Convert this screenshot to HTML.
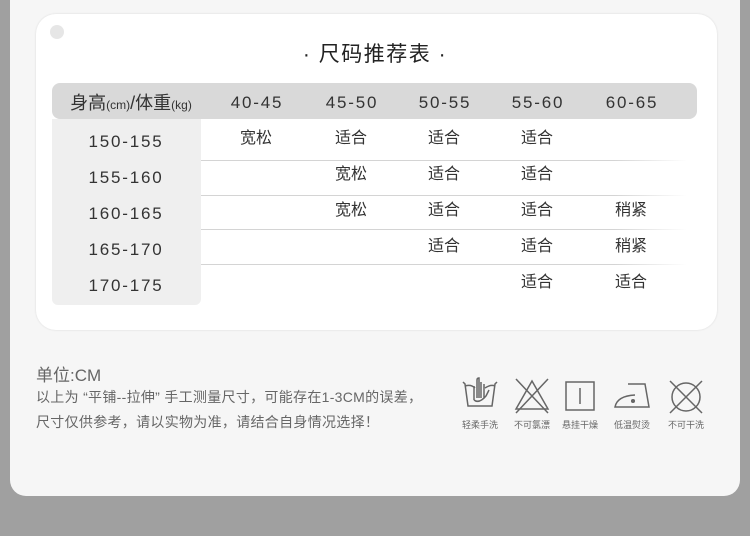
<!DOCTYPE html>
<html><head><meta charset="utf-8"><style>
*{margin:0;padding:0;box-sizing:border-box}
body{width:750px;height:536px;background:#a0a0a0;position:relative;overflow:hidden;font-family:"Liberation Sans","Noto Sans CJK SC",sans-serif;color:#333}
.panel{position:absolute;left:10px;top:-20px;width:730px;height:516px;background:#f6f6f6;border-radius:0 0 16px 16px}
.card{position:absolute;left:36px;top:14px;width:681px;height:316px;background:#fff;border-radius:20px;box-shadow:0 0 2px rgba(0,0,0,.12)}
.dot{position:absolute;left:50px;top:25px;width:14px;height:14px;border-radius:50%;background:#e6e6e6}
.title{position:absolute;left:0;width:750px;top:38px;text-align:center;font-size:21px;color:#222;letter-spacing:1.5px}
.hdr{position:absolute;left:52px;top:83px;width:645px;height:36px;background:#d9d9d9;border-radius:8px}
.lcol{position:absolute;left:52px;top:119px;width:149px;height:186px;background:#efefef;border-radius:0 0 6px 6px}
.t{position:absolute;font-size:17px;color:#333;transform:translateX(-50%);white-space:nowrap;line-height:20px;letter-spacing:1.8px}
.c{position:absolute;font-size:16px;color:#333;transform:translateX(-50%);white-space:nowrap;line-height:20px}
.line{position:absolute;left:201px;width:486px;height:1px;background:linear-gradient(to right,#d4d4d4 85%,rgba(212,212,212,0))}
.note{position:absolute;left:36px;color:#666;font-size:14px;white-space:nowrap;letter-spacing:0.3px}
.ic{position:absolute;top:376px}
.lab{position:absolute;top:418px;font-size:9px;color:#666;transform:translateX(-50%);white-space:nowrap}
</style></head><body>
<div class="panel"></div>
<div class="card"></div>
<div class="dot"></div>
<div class="title">· 尺码推荐表 ·</div>
<div class="hdr"></div>
<div class="lcol"></div>
<div class="t" style="left:131px;top:93px;font-size:18px;letter-spacing:0">身高<span style="font-size:12px">(cm)</span>/体重<span style="font-size:12px">(kg)</span></div>
<div class="t" style="left:257px;top:93px">40-45</div>
<div class="t" style="left:352px;top:93px">45-50</div>
<div class="t" style="left:445px;top:93px">50-55</div>
<div class="t" style="left:538px;top:93px">55-60</div>
<div class="t" style="left:632px;top:93px">60-65</div>
<div class="t" style="left:126px;top:132px">150-155</div>
<div class="t" style="left:126px;top:168px">155-160</div>
<div class="t" style="left:126px;top:204px">160-165</div>
<div class="t" style="left:126px;top:240px">165-170</div>
<div class="t" style="left:126px;top:276px">170-175</div>
<div class="line" style="top:160px"></div>
<div class="line" style="top:195px"></div>
<div class="line" style="top:229px"></div>
<div class="line" style="top:264px"></div>
<div class="c" style="left:256px;top:129px">宽松</div>
<div class="c" style="left:351px;top:129px">适合</div>
<div class="c" style="left:444px;top:129px">适合</div>
<div class="c" style="left:537px;top:129px">适合</div>
<div class="c" style="left:351px;top:165px">宽松</div>
<div class="c" style="left:444px;top:165px">适合</div>
<div class="c" style="left:537px;top:165px">适合</div>
<div class="c" style="left:351px;top:201px">宽松</div>
<div class="c" style="left:444px;top:201px">适合</div>
<div class="c" style="left:537px;top:201px">适合</div>
<div class="c" style="left:631px;top:201px">稍紧</div>
<div class="c" style="left:444px;top:237px">适合</div>
<div class="c" style="left:537px;top:237px">适合</div>
<div class="c" style="left:631px;top:237px">稍紧</div>
<div class="c" style="left:537px;top:273px">适合</div>
<div class="c" style="left:631px;top:273px">适合</div>
<div class="note" style="top:361px;font-size:17px;letter-spacing:0">单位:CM</div>
<div class="note" style="top:387px">以上为 “平铺--拉伸” 手工测量尺寸，可能存在1-3CM的误差，</div>
<div class="note" style="top:412px">尺寸仅供参考，请以实物为准，请结合自身情况选择！</div>
<svg class="ic" style="left:461px" width="38" height="38" viewBox="0 0 38 38" fill="none" stroke="#666" stroke-width="1.5"><path d="M2 6 L4 8 L7 30 L31 30 L34 8 L36 6"/><path d="M4 10 Q10 8 14 12 M24 12 Q30 8 34 10"/><path d="M13 24 L13 10 M16 22 L16 4 Q16 2 18 2 L18 22 M20 22 L20 6 M23 22 L23 8 M25 20 L28 14 M13 24 Q18 28 25 20"/></svg>
<svg class="ic" style="left:513px" width="38" height="38" viewBox="0 0 38 38" fill="none" stroke="#666" stroke-width="1.5"><path d="M19 5 L35 33 L3 33 Z"/><path d="M3 3 L35 37 M35 3 L3 37"/></svg>
<svg class="ic" style="left:565px" width="30" height="38" viewBox="0 0 30 38" fill="none" stroke="#666" stroke-width="1.5"><rect x="1" y="6" width="28" height="28"/><path d="M15 12 L15 28"/></svg>
<svg class="ic" style="left:613px" width="38" height="38" viewBox="0 0 38 38" fill="none" stroke="#666" stroke-width="1.5"><path d="M15 8 L32 8 L36 31 L2 31 Q4 20 22 19"/><circle cx="20" cy="25" r="1.3" fill="#666"/></svg>
<svg class="ic" style="left:667px" width="38" height="38" viewBox="0 0 38 38" fill="none" stroke="#666" stroke-width="1.5"><circle cx="19" cy="21" r="14"/><path d="M3 5 L35 37 M35 5 L3 37"/></svg>
<div class="lab" style="left:480px">轻柔手洗</div>
<div class="lab" style="left:532px">不可氯漂</div>
<div class="lab" style="left:580px">悬挂干燥</div>
<div class="lab" style="left:632px">低温熨烫</div>
<div class="lab" style="left:686px">不可干洗</div>
</body></html>
